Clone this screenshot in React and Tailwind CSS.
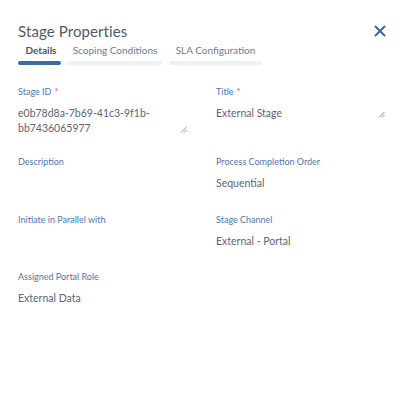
import React from "react";

function Grip() {
  return (
    <svg width="7" height="7" viewBox="0 0 7 7" className="absolute right-[4px] bottom-[3px]">
      <path d="M6.5 1 L1 6.5 M6.5 4 L4 6.5" stroke="#8a8f98" strokeWidth="1" fill="none" />
    </svg>
  );
}

function Field({ label, required, value, textarea, className = "" }) {
  return (
    <div className={`flex flex-col ${className}`}>
      <div className="text-[9px] leading-[12px] text-[#4f76ad] h-[12px]">
        {label}
        {required && <span className="text-[#e5484d] ml-[3px]">*</span>}
      </div>
      <div className={`relative mt-[8px] text-[10.5px] leading-[15px] text-[#5d6473] ${textarea ? "pr-[14px]" : ""}`}>
        {value}
        {textarea && <Grip />}
      </div>
    </div>
  );
}

export default function App() {
  return (
    <div className="w-[407px] h-[393px] bg-white font-['Lato','Noto_Sans',sans-serif] relative overflow-hidden">
      <div className="px-[18px] pt-[21px]">
        <div className="flex items-start justify-between">
          <h1 className="text-[15px] leading-[20px] text-[#4f5a6a] tracking-[0.1px]">Stage Properties</h1>
          <svg width="12" height="12" viewBox="0 0 12 12" className="mt-[4px] mr-[3px]">
            <path d="M1.5 1.5 L10.5 10.5 M10.5 1.5 L1.5 10.5" stroke="#3e6a9b" strokeWidth="2" strokeLinecap="round" />
          </svg>
        </div>
        <div className="flex gap-[6px] mt-[2px]">
          <div className="flex flex-col w-[43px]">
            <div className="text-[10px] leading-[14px] font-bold text-[#4a5566] text-center pl-[3px]">Details</div>
            <div className="mt-[4px] h-[4px] rounded-full bg-[#3f6b9c]"></div>
          </div>
          <div className="flex flex-col w-[96px]">
            <div className="text-[10px] leading-[14px] text-[#727b8b] text-center">Scoping Conditions</div>
            <div className="mt-[4px] h-[4px] rounded-full bg-[#eef2f7]"></div>
          </div>
          <div className="flex flex-col w-[93px]">
            <div className="text-[10px] leading-[14px] text-[#727b8b] text-center">SLA Configuration</div>
            <div className="mt-[4px] h-[4px] rounded-full bg-[#eef2f7]"></div>
          </div>
        </div>
        <div className="grid grid-cols-2 gap-x-[25px] mt-[21px]">
          <Field label="Stage ID" required textarea value={<>e0b78d8a-7b69-41c3-9f1b-<br />bb7436065977</>} className="h-[70px]" />
          <Field label="Title" required textarea value="External Stage" className="h-[70px]" />
          <Field label="Description" value="" className="h-[58px]" />
          <Field label="Process Completion Order" value="Sequential" className="h-[58px]" />
          <Field label="Initiate in Parallel with" value="" className="h-[57px]" />
          <Field label="Stage Channel" value="External - Portal" className="h-[57px]" />
          <Field label="Assigned Portal Role" value="External Data" />
        </div>
      </div>
    </div>
  );
}
